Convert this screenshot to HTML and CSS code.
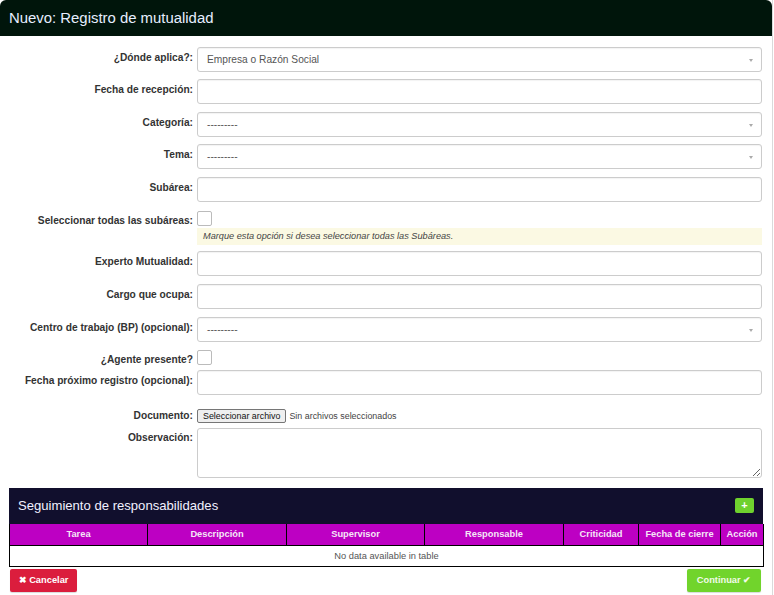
FILE: index.html
```html
<!DOCTYPE html>
<html lang="es">
<head>
<meta charset="utf-8">
<title>Nuevo: Registro de mutualidad</title>
<link rel="stylesheet" href="styles.css">
</head>
<body>
<div class="modal">
  <div class="modal-header">Nuevo: Registro de mutualidad</div>
  <div class="modal-body">
    <div class="row r-first">
      <label class="lbl">¿Dónde aplica?:</label>
      <div class="ctl"><div class="select">Empresa o Razón Social<span class="caret"></span></div></div>
    </div>
    <div class="row">
      <label class="lbl">Fecha de recepción:</label>
      <div class="ctl"><div class="input"></div></div>
    </div>
    <div class="row">
      <label class="lbl">Categoría:</label>
      <div class="ctl"><div class="select">---------<span class="caret"></span></div></div>
    </div>
    <div class="row">
      <label class="lbl">Tema:</label>
      <div class="ctl"><div class="select">---------<span class="caret"></span></div></div>
    </div>
    <div class="row">
      <label class="lbl">Subárea:</label>
      <div class="ctl"><div class="input"></div></div>
    </div>
    <div class="row r-check">
      <label class="lbl">Seleccionar todas las subáreas:</label>
      <div class="ctl">
        <div class="checkbox"></div>
        <div class="help">Marque esta opción si desea seleccionar todas las Subáreas.</div>
      </div>
    </div>
    <div class="row r-wide">
      <label class="lbl">Experto Mutualidad:</label>
      <div class="ctl"><div class="input"></div></div>
    </div>
    <div class="row r-wide">
      <label class="lbl">Cargo que ocupa:</label>
      <div class="ctl"><div class="input"></div></div>
    </div>
    <div class="row r-wide">
      <label class="lbl">Centro de trabajo (BP) (opcional):</label>
      <div class="ctl"><div class="select">---------<span class="caret"></span></div></div>
    </div>
    <div class="row r-agent">
      <label class="lbl">¿Agente presente?</label>
      <div class="ctl"><div class="checkbox"></div></div>
    </div>
    <div class="row r-next">
      <label class="lbl">Fecha próximo registro (opcional):</label>
      <div class="ctl"><div class="input"></div></div>
    </div>
    <div class="row r-doc">
      <label class="lbl">Documento:</label>
      <div class="ctl file"><span class="file-btn">Seleccionar archivo</span><span class="file-txt">Sin archivos seleccionados</span></div>
    </div>
    <div class="row r-obs">
      <label class="lbl">Observación:</label>
      <div class="ctl"><textarea class="textarea"></textarea></div>
    </div>

    <div class="panel">
      <div class="panel-head">
        <span class="panel-title">Seguimiento de responsabilidades</span>
        <span class="btn-plus">+</span>
      </div>
      <table class="tbl">
        <thead>
          <tr>
            <th class="c1">Tarea</th>
            <th class="c2">Descripción</th>
            <th class="c3">Supervisor</th>
            <th class="c4">Responsable</th>
            <th class="c5">Criticidad</th>
            <th class="c6">Fecha de cierre</th>
            <th class="c7">Acción</th>
          </tr>
        </thead>
        <tbody>
          <tr><td colspan="7" class="empty">No data available in table</td></tr>
        </tbody>
      </table>
    </div>

    <div class="footer">
      <span class="btn btn-red">&#10006; Cancelar</span>
      <span class="btn btn-green">Continuar &#10004;</span>
    </div>
  </div>
</div>
</body>
</html>
```
FILE: styles.css
```css
* { box-sizing: border-box; }
html, body { margin: 0; padding: 0; background: #fff; }
body {
  font-family: "Liberation Sans", Arial, sans-serif;
  color: #333;
  width: 774px;
  height: 595px;
  overflow: hidden;
}
.modal {
  width: 773px;
  height: 595px;
  border-right: 1px solid #dadada;
  background: #fff;
}
.modal-header {
  height: 36px;
  background: #00150b;
  border-radius: 6px 6px 0 0;
  color: #e6eeff;
  font-size: 14.9px;
  line-height: 37px;
  padding-left: 9px;
}
.row {
  display: grid;
  grid-template-columns: 193px 565px;
  column-gap: 4px;
  margin-bottom: 7.5px;
}
.r-first { margin-top: 10.5px; }
.lbl {
  text-align: right;
  font-weight: bold;
  font-size: 10.2px;
  line-height: 14px;
  padding-top: 4px;
  color: #333;
  white-space: nowrap;
}
.input, .select {
  height: 25px;
  border: 1px solid #ccc;
  border-radius: 3px;
  background: #fff;
  box-shadow: inset 0 1px 1px rgba(0,0,0,0.05);
}
.select {
  position: relative;
  font-size: 10.2px;
  line-height: 24px;
  padding-left: 9px;
  color: #555;
}
.caret {
  position: absolute;
  right: 8px;
  top: 11px;
  width: 0;
  height: 0;
  border-left: 2.5px solid transparent;
  border-right: 2.5px solid transparent;
  border-top: 3px solid #aaa;
}
.r-check { margin-top: 9px; margin-bottom: 6px; }
.r-check .lbl { padding-top: 3px; }
.checkbox {
  width: 15px;
  height: 15px;
  border: 1px solid #bbb;
  border-radius: 2px;
  background: #fff;
}
.help {
  margin-top: 2px;
  height: 17px;
  background: #fbf9e3;
  font-style: italic;
  font-size: 9.2px;
  line-height: 17px;
  padding-left: 6px;
  color: #444;
}
.r-wide { margin-bottom: 8px; }
.r-agent { margin-top: 0; margin-bottom: 3px; }
.r-agent .lbl { padding-top: 3px; }
.r-next { margin-bottom: 14px; }
.r-doc { margin-bottom: 4px; }
.r-doc .lbl { padding-top: 0; line-height: 13px; }
.file { display: flex; align-items: center; height: 15px; }
.file-btn {
  display: inline-block;
  height: 14px;
  line-height: 12px;
  font-size: 8.9px;
  padding: 0 5px;
  border: 1px solid #767676;
  border-radius: 2px;
  background: #efefef;
  color: #111;
}
.file-txt {
  font-size: 8.9px;
  color: #444;
  margin-left: 3px;
}
.r-obs .lbl { padding-top: 3px; }
.textarea {
  display: block;
  width: 565px;
  height: 50px;
  border: 1px solid #ccc;
  border-radius: 3px;
  margin: 0;
  resize: both;
  font-family: inherit;
}
.r-obs { margin-bottom: 10px; }
.panel {
  margin: 0 0 0 9px;
  width: 754px;
}
.panel-head {
  height: 36px;
  background: #110f2d;
  display: flex;
  align-items: center;
  justify-content: space-between;
  padding: 0 9px 0 9px;
}
.panel-title {
  color: #f1f1ff;
  font-size: 13.1px;
}
.btn-plus {
  width: 19px;
  height: 15px;
  background: #6fd12e;
  border-radius: 2px;
  color: #fff;
  font-size: 11px;
  font-weight: bold;
  line-height: 15px;
  text-align: center;
}
.tbl {
  width: 754px;
  border-collapse: collapse;
  table-layout: fixed;
}
.tbl th {
  background: #bd00c3;
  color: #f5e6f7;
  font-size: 9.3px;
  font-weight: bold;
  height: 22px;
  padding: 0;
  border: 1px solid #000;
  border-top: none;
  text-align: center;
}
.c1 { width: 138px; }
.c2 { width: 139px; }
.c3 { width: 138px; }
.c4 { width: 139px; }
.c5 { width: 75px; }
.c6 { width: 82px; }
.c7 { width: 43px; }
.tbl td.empty {
  height: 21px;
  border: 1px solid #000;
  text-align: center;
  font-size: 9.3px;
  color: #555;
  padding: 0;
}
.footer {
  display: flex;
  justify-content: space-between;
  padding: 2px 11px 0 10px;
}
.btn {
  display: inline-block;
  height: 23px;
  line-height: 23px;
  font-size: 9.3px;
  font-weight: bold;
  color: #fff;
  border-radius: 2px;
  box-shadow: 0 1px 1px rgba(0,0,0,0.15);
}
.btn-red { background: #db1d3d; width: 67px; text-align: center; }
.btn-green { background: #71d42c; width: 74px; text-align: center; color: #f2fbe9; }
```
